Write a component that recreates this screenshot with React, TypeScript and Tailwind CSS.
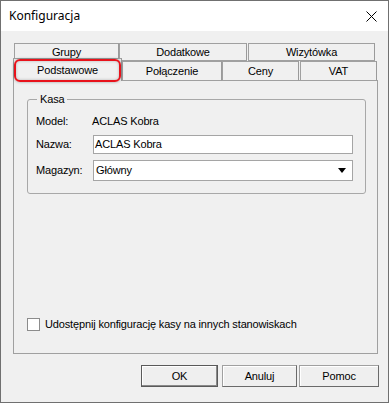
const body = { fontFamily: '"Liberation Sans", Arial, sans-serif' };

const Tab = ({ label, w, h = 18, selected = false }: { label: string; w: string; h?: number; selected?: boolean }) => (
  <div
    className={`${w} flex items-center justify-center text-[11px] text-black bg-[#f0f0f0] border-t border-l border-r border-t-[#a0a0a0] border-l-[#a0a0a0] border-r-[#9a9a9a] ${selected ? '' : 'border-b border-b-[#a0a0a0]'}`}
    style={{ height: h }}
  >
    {label}
  </div>
);

const Button = ({ label, w, def = false }: { label: string; w: string; def?: boolean }) => (
  <button
    className={`${w} h-[22px] flex items-center justify-center text-[11px] text-black bg-[#efefef] border ${def ? 'border-[#5a5a5a] shadow-[inset_-1px_-1px_0_#8a8a8a,inset_1px_1px_0_#ffffff]' : 'border-[#a0a0a0] border-r-[#6a6a6a] border-b-[#6a6a6a] shadow-[inset_1px_1px_0_#ffffff]'}`}
  >
    {label}
  </button>
);

export default function App() {
  return (
    <div className="w-[389px] h-[403px] border border-[#707070] flex flex-col bg-[#f0f0f0] tracking-[-0.15px]" style={body}>
      {/* title bar */}
      <div className="h-[30px] bg-white flex items-center justify-between pl-[8px] pr-[11px]">
        <span className="text-[12px] text-black tracking-normal" style={{ fontFamily: '"Noto Sans", "Open Sans", sans-serif' }}>
          Konfiguracja
        </span>
        <svg width="11" height="11" viewBox="0 0 11 11" className="text-black">
          <path d="M0.5 0.5 L10.5 10.5 M10.5 0.5 L0.5 10.5" stroke="currentColor" strokeWidth="1" />
        </svg>
      </div>

      <div className="flex-1 flex flex-col pl-[12px] pt-[12px]">
        {/* tabs */}
        <div className="relative w-[365px]">
          <div className="flex ml-[1px]">
            <Tab label="Grupy" w="w-[105px]" />
            <Tab label="Dodatkowe" w="w-[128px]" />
            <div className="w-[1px]" />
            <Tab label="Wizytówka" w="w-[127px]" />
          </div>
          <div className="flex items-end h-[22px] -mt-[2px] relative z-10 -mb-[1px]">
            <Tab label="Podstawowe" w="w-[109px]" h={23} selected />
            <Tab label="Połączenie" w="w-[100px]" h={20} />
            <Tab label="Ceny" w="w-[77px]" h={20} />
            <div className="w-[1px]" />
            <Tab label="VAT" w="w-[77px]" h={20} />
            <div className="absolute left-[1px] top-0 w-[107px] h-[23px] rounded-[6px] border-2 border-[#e8121b] shadow-[0_0_3px_rgba(0,0,0,0.35),inset_0_0_3px_rgba(0,0,0,0.25)]" />
          </div>

          {/* panel */}
          <div className="w-[365px] h-[274px] border border-[#a0a0a0] flex flex-col pl-[13px]">
            <div className="relative mt-[18px] w-[339px] h-[95px] border border-[#a8a8a8] rounded-[3px] flex flex-col pl-[8px]">
              <span className="absolute -top-[8px] left-[9px] px-[3px] bg-[#f0f0f0] text-[11px] leading-[14px] text-black">Kasa</span>
              <div className="mt-[13px] h-[16px] flex items-center text-[11px] text-black">
                <span className="w-[56px]">Model:</span>
                <span>ACLAS Kobra</span>
              </div>
              <div className="mt-[6px] flex items-center text-[11px] text-black">
                <span className="w-[57px]">Nazwa:</span>
                <div className="w-[260px] h-[19px] bg-white border border-[#a5a5a5] flex items-center pl-[1px]">ACLAS Kobra</div>
              </div>
              <div className="mt-[6px] flex items-center text-[11px] text-black">
                <span className="w-[57px]">Magazyn:</span>
                <div className="w-[260px] h-[21px] bg-white border border-[#a5a5a5] flex items-center justify-between pl-[2px] pr-[6px]">
                  <span>Główny</span>
                  <svg width="8" height="5" viewBox="0 0 8 5">
                    <path d="M0 0 H8 L4 5 Z" fill="#000" />
                  </svg>
                </div>
              </div>
            </div>

            <div className="mt-[122px] flex items-center">
              <div className="w-[13px] h-[13px] bg-white border border-[#8c8c8c]" />
              <span className="ml-[5px] text-[11px] text-black">Udostępnij konfigurację kasy na innych stanowiskach</span>
            </div>
          </div>
        </div>

        {/* buttons */}
        <div className="mt-[11px] flex ml-[128px]">
          <Button label="OK" w="w-[77px]" def />
          <div className="w-[4px]" />
          <Button label="Anuluj" w="w-[75px]" />
          <div className="w-[2px]" />
          <Button label="Pomoc" w="w-[80px]" />
        </div>
      </div>
    </div>
  );
}
